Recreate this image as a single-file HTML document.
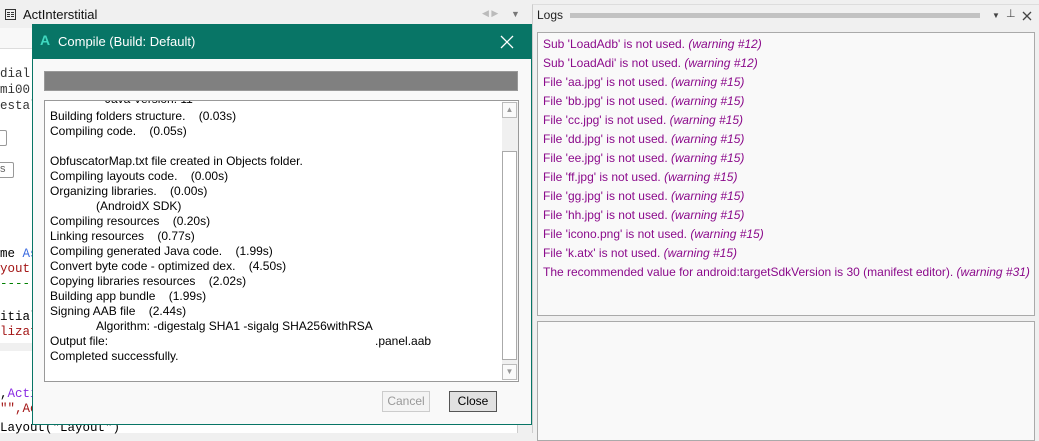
<!DOCTYPE html>
<html><head><meta charset="utf-8"><style>
*{margin:0;padding:0;box-sizing:border-box}
body{width:1039px;height:433px;overflow:hidden;background:#f0f0f0;font-family:"Liberation Sans",sans-serif;font-size:12px;position:relative}
.abs{position:absolute}
.mono{font-family:"Liberation Mono",monospace;font-size:12.5px;white-space:pre}
.dl{position:absolute;left:50px;white-space:pre;color:#000;font-size:12px}
.lg{position:absolute;left:543px;white-space:pre;color:#8b0a8b;font-size:12px}
.lg i{color:#8b0a8b}
</style></head><body>
<div class="abs" style="left:0;top:0;width:531px;height:28px;background:#f0f0f0"></div>
<div class="abs" style="left:5px;top:9px;width:11px;height:11px;border:1px solid #333"></div>
<div class="abs" style="left:7px;top:12px;width:3px;height:1px;background:#333;box-shadow:0 2px #333,0 4px #333,4px 0 #333,4px 2px #333,4px 4px #333"></div>
<div class="abs" style="left:23px;top:7px;font-size:13px;color:#111">ActInterstitial</div>
<div class="abs" style="left:482px;top:8px;color:#bbb;font-size:9px">◀ ▶</div>
<div class="abs" style="left:511px;top:9px;color:#777;font-size:9px">▼</div>
<div class="abs" style="left:0;top:28px;width:524px;height:405px;background:#fff"></div>
<div class="abs" style="left:0;top:28px;width:524px;height:21px;background:#f8f8f8;border-bottom:1px solid #ddd"></div>
<div class="abs" style="left:517px;top:28px;width:14px;height:405px;background:#f0f0f0;border-left:1px solid #ccc"></div>
<div class="abs mono" style="left:0;top:67px;color:#333">dial.</div>
<div class="abs mono" style="left:0;top:83px;color:#333">mi00</div>
<div class="abs mono" style="left:0;top:99px;color:#333">estal</div>
<div class="abs" style="left:-5px;top:130px;width:12px;height:16px;border:1px solid #999;border-radius:2px;background:#fff"></div>
<div class="abs" style="left:-5px;top:162px;width:19px;height:16px;border:1px solid #999;border-radius:2px;background:#fff;font-size:11px;color:#666;padding-left:4px">s</div>
<div class="abs mono" style="left:0;top:247px;color:#000">me <span style="color:#3a6ae0">As</span></div>
<div class="abs mono" style="left:0;top:262px;color:#a31515">yout'</div>
<div class="abs mono" style="left:0;top:277px;color:#008000">-----</div>
<div class="abs mono" style="left:0;top:310px;color:#000">itial</div>
<div class="abs mono" style="left:0;top:325px;color:#a31515">lizat</div>
<div class="abs" style="left:0;top:343px;width:32px;height:8px;background:#f0f0f0"></div>
<div class="abs mono" style="left:0;top:387px;color:#000">,<span style="color:#8a2be2">Acti</span></div>
<div class="abs mono" style="left:0;top:402px;color:#a31515">"",Ac</div>
<div class="abs mono" style="left:0;top:421px;color:#000">Layout("Layout")</div>

<div class="abs" style="left:32px;top:24px;width:500px;height:401px;background:#f9f9f9;border:1px solid #087566"></div>
<div class="abs" style="left:32px;top:24px;width:500px;height:35px;background:#087566"></div>
<div class="abs" style="left:40px;top:32px;color:#3fd9c0;font-size:14px;font-weight:bold">A</div>
<div class="abs" style="left:58px;top:34px;color:#fff;font-size:13px">Compile (Build: Default)</div>
<svg class="abs" style="left:500px;top:35px" width="14" height="14"><path d="M1 1L13 13M13 1L1 13" stroke="#fff" stroke-width="1.3"/></svg>
<div class="abs" style="left:44px;top:71px;width:474px;height:20px;background:#808080;border:1px solid #999"></div>
<div class="abs" style="left:44px;top:100px;width:475px;height:282px;background:#fff;border:1px solid #999;overflow:hidden">
 <div class="abs" style="left:60px;top:-9px;font-size:12px">Java Version: 11</div>
</div>
<div class="abs" style="left:502px;top:102px;width:16px;height:278px;background:#f0f0f0"></div>
<div class="abs" style="left:502px;top:102px;width:15px;height:16px;border:1px solid #bbb;background:#fafafa;color:#999;font-size:8px;text-align:center;line-height:14px">▲</div>
<div class="abs" style="left:502px;top:151px;width:15px;height:209px;border:1px solid #aaa;background:#fff"></div>
<div class="abs" style="left:502px;top:364px;width:15px;height:16px;border:1px solid #bbb;background:#fafafa;color:#999;font-size:8px;text-align:center;line-height:14px">▼</div>
<div class="dl" style="top:109px">Building folders structure.    (0.03s)</div>
<div class="dl" style="top:124px">Compiling code.    (0.05s)</div>
<div class="dl" style="top:154px">ObfuscatorMap.txt file created in Objects folder.</div>
<div class="dl" style="top:169px">Compiling layouts code.    (0.00s)</div>
<div class="dl" style="top:184px">Organizing libraries.    (0.00s)</div>
<div class="dl" style="top:199px;left:96px">(AndroidX SDK)</div>
<div class="dl" style="top:214px">Compiling resources    (0.20s)</div>
<div class="dl" style="top:229px">Linking resources    (0.77s)</div>
<div class="dl" style="top:244px">Compiling generated Java code.    (1.99s)</div>
<div class="dl" style="top:259px">Convert byte code - optimized dex.    (4.50s)</div>
<div class="dl" style="top:274px">Copying libraries resources    (2.02s)</div>
<div class="dl" style="top:289px">Building app bundle    (1.99s)</div>
<div class="dl" style="top:304px">Signing AAB file    (2.44s)</div>
<div class="dl" style="top:319px;left:96px">Algorithm: -digestalg SHA1 -sigalg SHA256withRSA</div>
<div class="dl" style="top:334px">Output file:</div>
<div class="dl" style="top:334px;left:375px">.panel.aab</div>
<div class="dl" style="top:349px">Completed successfully.</div>
<div class="abs" style="left:382px;top:391px;width:48px;height:21px;border:1px solid #ccc;background:#f4f4f4;color:#999;text-align:center;line-height:19px;font-size:12px">Cancel</div>
<div class="abs" style="left:449px;top:391px;width:48px;height:21px;border:1px solid #555;background:#e1e1e1;color:#000;text-align:center;line-height:19px;font-size:12px">Close</div>

<div class="abs" style="left:532px;top:4px;width:507px;height:429px;background:#f0f0f0;border-left:1px solid #ccc;border-top:1px solid #ddd"></div>
<div class="abs" style="left:537px;top:8px;font-size:12px;color:#222">Logs</div>
<div class="abs" style="left:570px;top:13px;width:410px;height:5px;background-image:radial-gradient(circle,#999 0.7px,transparent 0.9px);background-size:2px 2px"></div>
<div class="abs" style="left:992px;top:11px;color:#444;font-size:8px">▼</div>
<div class="abs" style="left:1006px;top:7px;color:#444;font-size:11px">⊥</div>
<svg class="abs" style="left:1022px;top:11px" width="10" height="10"><path d="M1 1L9 9M9 1L1 9" stroke="#444" stroke-width="1.3"/></svg>
<div class="abs" style="left:537px;top:32px;width:498px;height:284px;background:#f9f9f9;border:1px solid #aaa"></div>
<div class="abs" style="left:537px;top:321px;width:498px;height:120px;background:#f9f9f9;border:1px solid #aaa"></div>
<div class="lg" style="top:37px">Sub 'LoadAdb' is not used. <i>(warning #12)</i></div>
<div class="lg" style="top:56px">Sub 'LoadAdi' is not used. <i>(warning #12)</i></div>
<div class="lg" style="top:75px">File 'aa.jpg' is not used. <i>(warning #15)</i></div>
<div class="lg" style="top:94px">File 'bb.jpg' is not used. <i>(warning #15)</i></div>
<div class="lg" style="top:113px">File 'cc.jpg' is not used. <i>(warning #15)</i></div>
<div class="lg" style="top:132px">File 'dd.jpg' is not used. <i>(warning #15)</i></div>
<div class="lg" style="top:151px">File 'ee.jpg' is not used. <i>(warning #15)</i></div>
<div class="lg" style="top:170px">File 'ff.jpg' is not used. <i>(warning #15)</i></div>
<div class="lg" style="top:189px">File 'gg.jpg' is not used. <i>(warning #15)</i></div>
<div class="lg" style="top:208px">File 'hh.jpg' is not used. <i>(warning #15)</i></div>
<div class="lg" style="top:227px">File 'icono.png' is not used. <i>(warning #15)</i></div>
<div class="lg" style="top:246px">File 'k.atx' is not used. <i>(warning #15)</i></div>
<div class="lg" style="top:265px">The recommended value for android:targetSdkVersion is 30 (manifest editor). <i>(warning #31)</i></div>
</body></html>
